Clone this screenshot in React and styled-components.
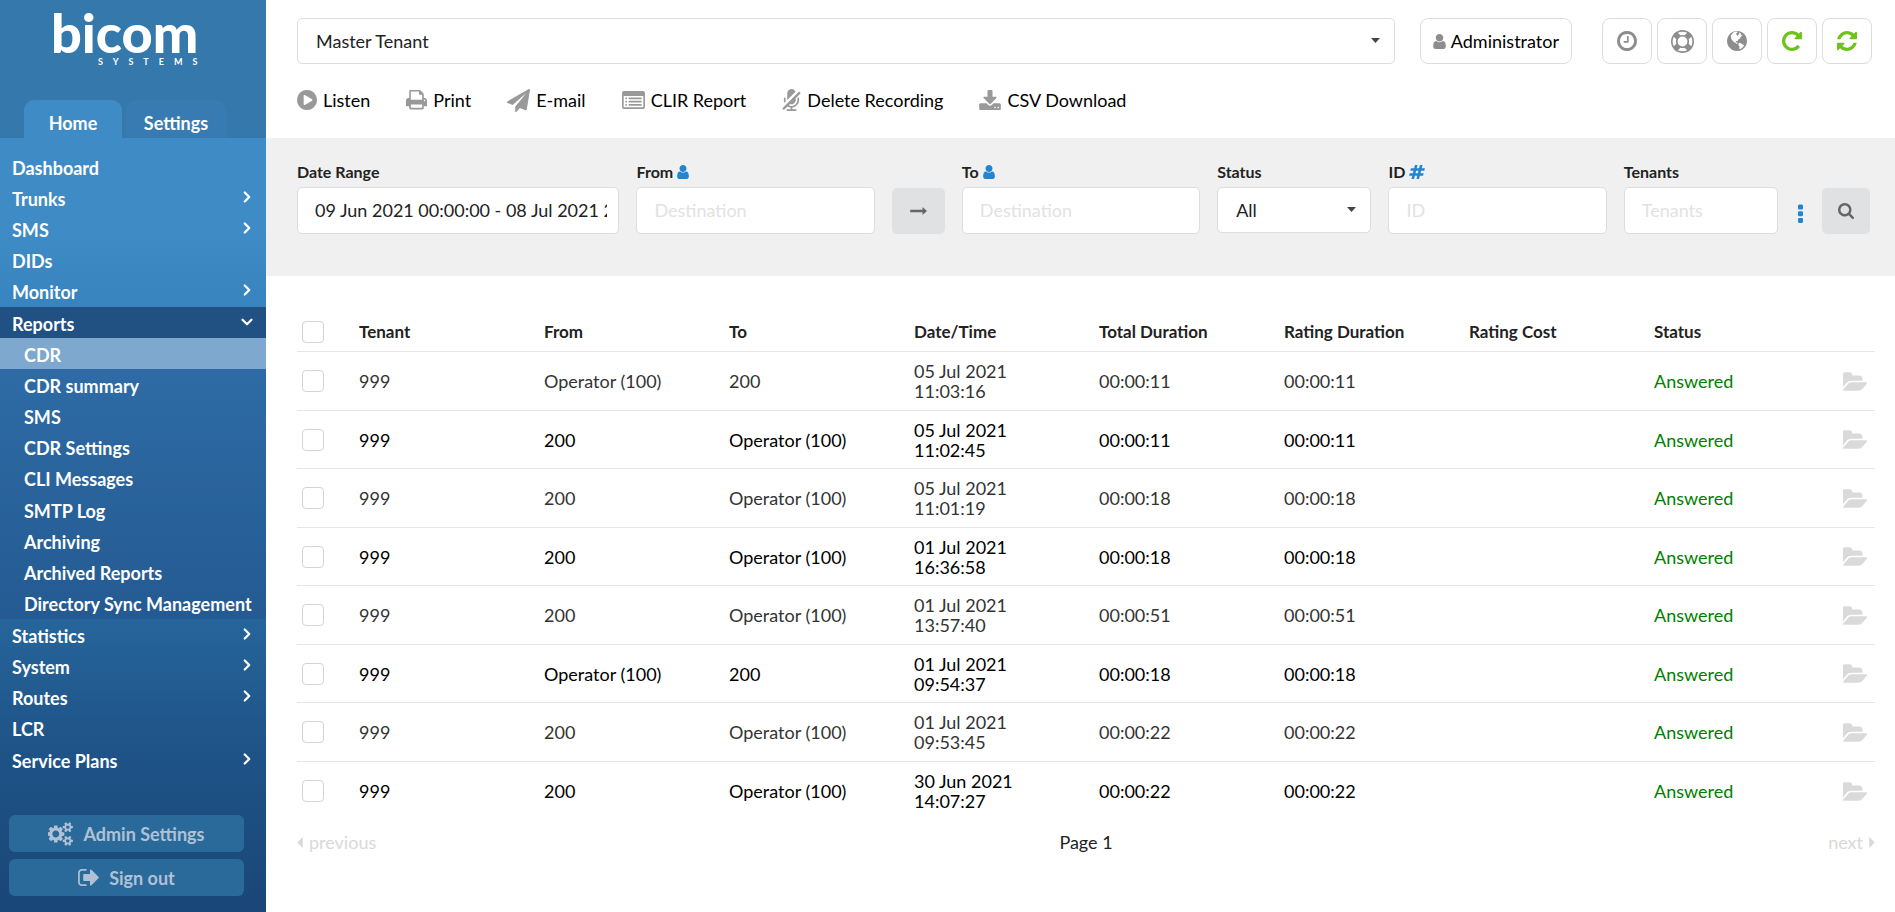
import React from "react";
import styled, { createGlobalStyle } from "styled-components";
import { ChevronDown, ChevronRight } from "lucide-react";

const GlobalStyle = createGlobalStyle`
    * {
        box-sizing: border-box;
    }
    body {
        margin: 0;
        background: #fff;
        color: #222;
        font-family: Lato, "Liberation Sans", sans-serif;
        font-size: 18px;
        line-height: 20px;
    }
    button, input, select {
        margin: 0;
        font-family: inherit;
        font-size: 18px;
    }
    button {
        cursor: pointer;
    }
`

/* Icons, all on the same 1792 grid */

const COG_SMALL = "v140q0 16-149 31-12 27-30 52 51 113 51 138 0 4-4 7-122 71-124 71-8 0-46-47t-52-68q-20 2-30 2t-30-2q-14 21-52 68t-46 47q-2 0-124-71-4-3-4-7 0-25 51-138-18-25-30-52-149-15-149-31v-140q0-16 149-31 13-29 30-52-51-113-51-138 0-4 4-7 4-2 35-20t59-34 30-16q8 0 46 46.5t52 67.5q20-2 30-2t30 2q51-71 92-112l6-2q4 0 124 70 4 3 4 7 0 25-51 138 17 23 30 52 149 15 149 31z"
const BULLET = "v64q0 13-9.5 22.5t-22.5 9.5h-64q-13 0-22.5-9.5t-9.5-22.5v-64q0-13 9.5-22.5t22.5-9.5h64q13 0 22.5 9.5t9.5 22.5z"
const LINE = "v64q0 13-9.5 22.5t-22.5 9.5h-960q-13 0-22.5-9.5t-9.5-22.5v-64q0-13 9.5-22.5t22.5-9.5h960q13 0 22.5 9.5t9.5 22.5z"
const DOT = "v192q0 40-28 68t-68 28h-192q-40 0-68-28t-28-68v-192q0-40 28-68t68-28h192q40 0 68 28t28 68z"

const icons = {
    play: "M896 128q209 0 385.5 103t279.5 279.5 103 385.5-103 385.5-279.5 279.5-385.5 103-385.5-103-279.5-279.5-103-385.5 103-385.5 279.5-279.5 385.5-103zm384 823q32-18 32-55t-32-55l-544-320q-31-19-64-1-32 19-32 56v640q0 37 32 56 16 8 32 8 17 0 32-9z",
    print: "M448 1536h896v-256h-896v256zm0-640h896v-384h-160q-40 0-68-28t-28-68v-160h-640v640zm1152 64q0-26-19-45t-45-19-45 19-19 45 19 45 45 19 45-19 19-45zm128 0v416q0 13-9.5 22.5t-22.5 9.5h-224v160q0 40-28 68t-68 28h-960q-40 0-68-28t-28-68v-160h-224q-13 0-22.5-9.5t-9.5-22.5v-416q0-79 56.5-135.5t135.5-56.5h64v-544q0-40 28-68t68-28h672q40 0 88 20t76 48l152 152q28 28 48 76t20 88v256h64q79 0 135.5 56.5t56.5 135.5z",
    plane: "M1764 11q33 24 27 64l-256 1536q-5 29-32 45-14 8-31 8-11 0-24-5l-453-185-242 295q-18 23-49 23-13 0-22-4-19-7-30.5-23.5t-11.5-36.5v-349l864-1059-1069 925-395-162q-37-14-40-55-2-40 32-59l1664-960q15-9 32-9 20 0 36 11z",
    list: `M384 1184${BULLET}M384 928${BULLET}M384 672${BULLET}M1536 1184${LINE}M1536 928${LINE}M1536 672${LINE}M1664 1376v-832q0-13-9.5-22.5t-22.5-9.5h-1472q-13 0-22.5 9.5t-9.5 22.5v832q0 13 9.5 22.5t22.5 9.5h1472q13 0 22.5-9.5t9.5-22.5zm128-1088v1088q0 66-47 113t-113 47h-1472q-66 0-113-47t-47-113v-1088q0-66 47-113t113-47h1472q66 0 113 47t47 113z`,
    micOff: "M271 943l-101 101q-42-103-42-211v-128q0-26 19-45t45-19 45 19 19 45v128q0 53 15 110zm1114-602l-361 361v128q0 132-94 226t-226 94q-55 0-109-19l-96 96q97 51 205 51 185 0 316.5-131.5t131.5-316.5v-128q0-26 19-45t45-19 45 19 19 45v128q0 221-147.5 384.5t-364.5 187.5v132h256q26 0 45 19t19 45-19 45-45 19h-640q-26 0-45-19t-19-45 19-45 45-19h256v-132q-125-13-235-81l-254 254q-10 10-23 10t-23-10l-82-82q-10-10-10-23t10-23l1234-1234q10-10 23-10t23 10l82 82q10 10 10 23t-10 23zm-380-132l-621 621v-512q0-132 94-226t226-94q102 0 184.5 59t116.5 152z",
    download: "M1344 1344q0-26-19-45t-45-19-45 19-19 45 19 45 45 19 45-19 19-45zm256 0q0-26-19-45t-45-19-45 19-19 45 19 45 45 19 45-19 19-45zm128-224v320q0 40-28 68t-68 28h-1472q-40 0-68-28t-28-68v-320q0-40 28-68t68-28h465l135 136q58 56 136 56t136-56l136-136h464q40 0 68 28t28 68zm-325-569q17 41-14 70l-448 448q-18 19-45 19t-45-19l-448-448q-31-29-14-70 17-39 59-39h256v-448q0-26 19-45t45-19h256q26 0 45 19t19 45v448h256q42 0 59 39z",
    user: "M1536 1399q0 109-62.5 187t-150.5 78h-854q-88 0-150.5-78t-62.5-187q0-85 8.5-160.5t31.5-152 58.5-131 94-89 134.5-34.5q131 128 313 128t313-128q76 0 134.5 34.5t94 89 58.5 131 31.5 152 8.5 160.5zm-256-887q0 159-112.5 271.5t-271.5 112.5-271.5-112.5-112.5-271.5 112.5-271.5 271.5-112.5 271.5 112.5 112.5 271.5z",
    arrow: "M1728 893q0 14-10 24l-384 354q-16 14-35 6-19-9-19-29v-224h-1248q-14 0-23-9t-9-23v-192q0-14 9-23t23-9h1248v-224q0-21 19-29t35 5l384 350q10 10 10 23z",
    dots: `M1088 1248${DOT}M1088 736${DOT}M1088 224${DOT}`,
    search: "M1216 832q0-185-131.5-316.5t-316.5-131.5-316.5 131.5-131.5 316.5 131.5 316.5 316.5 131.5 316.5-131.5 131.5-316.5zm512 832q0 52-38 90t-90 38q-54 0-90-38l-343-342q-179 124-399 124-143 0-273.5-55.5t-225-150-150-225-55.5-273.5 55.5-273.5 150-225 225-150 273.5-55.5 273.5 55.5 225 150 150 225 55.5 273.5q0 220-124 399l343 343q37 37 37 90z",
    clock: "M1024 544v448q0 14-9 23t-23 9h-320q-14 0-23-9t-9-23v-64q0-14 9-23t23-9h224v-352q0-14 9-23t23-9h64q14 0 23 9t9 23zm416 352q0-148-73-273t-198-198-273-73-273 73-198 198-73 273 73 273 198 198 273 73 273-73 198-198 73-273zm224 0q0 209-103 385.5t-279.5 279.5-385.5 103-385.5-103-279.5-279.5-103-385.5 103-385.5 279.5-279.5 385.5-103 385.5 103 279.5 279.5 103 385.5z",
    ring: "M896 0q182 0 348 71t286 191 191 286 71 348-71 348-191 286-286 191-348 71-348-71-286-191-191-286-71-348 71-348 191-286 286-191 348-71zm0 128q-190 0-361 90l194 194q82-28 167-28t167 28l194-194q-171-90-361-90zm-678 1129l194-194q-28-82-28-167t28-167l-194-194q-90 171-90 361t90 361zm678 407q190 0 361-90l-194-194q-82 28-167 28t-167-28l-194 194q171 90 361 90zm0-384q159 0 271.5-112.5t112.5-271.5-112.5-271.5-271.5-112.5-271.5 112.5-112.5 271.5 112.5 271.5 271.5 112.5zm484-217l194 194q90-171 90-361t-90-361l-194 194q28 82 28 167t-28 167z",
    globe: "M896 128q209 0 385.5 103t279.5 279.5 103 385.5-103 385.5-279.5 279.5-385.5 103-385.5-103-279.5-279.5-103-385.5 103-385.5 279.5-279.5 385.5-103zM480 400l-70 110 40 100 10 130 90 110 120 140 130 50 90 80 50-30-60-90-80-10 10-90 90-10 50 50 10-110 90-90 110-60-60-50 120-20-20-90 50 20 70-60-110-50-40-130-120-70 20 110-60 80-80 70-50-80-80-50 100-80 40-90-130-20-180 50zM1060 1030l-60 100 30 130 60 60-10 190 50 20 170-110 130-160-30-70-130-60-60-70z",
    repeat: "M1664 256v448q0 26-19 45t-45 19h-448q-42 0-59-40-17-39 14-69l138-138q-148-137-349-137-104 0-198.5 40.5t-163.5 109.5-109.5 163.5-40.5 198.5 40.5 198.5 109.5 163.5 163.5 109.5 198.5 40.5q119 0 225-52t179-147q7-10 23-12 15 0 25 9l137 138q9 8 9.5 20.5t-7.5 22.5q-109 132-264 204.5t-327 72.5q-156 0-298-61t-245-164-164-245-61-298 61-298 164-245 245-164 298-61q147 0 284.5 55.5t244.5 156.5l130-129q29-31 70-14 39 17 39 59z",
    refresh: "M1639 1056q0 5-1 7-64 268-268 434.5t-478 166.5q-146 0-282.5-55t-243.5-157l-129 129q-19 19-45 19t-45-19-19-45v-448q0-26 19-45t45-19h448q26 0 45 19t19 45-19 45l-137 137q71 66 161 102t187 36q134 0 250-65t186-179q11-17 53-117 8-23 30-23h192q13 0 22.5 9.5t9.5 22.5zm25-800v448q0 26-19 45t-45 19h-448q-26 0-45-19t-19-45 19-45l138-138q-148-137-349-137-134 0-250 65t-186 179q-11 17-53 117-8 23-30 23h-199q-13 0-22.5-9.5t-9.5-22.5v-7q65-268 270-434.5t480-166.5q146 0 284 55.5t245 156.5l130-129q19-19 45-19t45 19 19 45z",
    folder: "M1815 952q0 31-31 66l-336 396q-43 51-120.5 86.5t-143.5 35.5h-1088q-34 0-60.5-13t-26.5-43q0-31 31-66l336-396q43-51 120.5-86.5t143.5-35.5h1088q34 0 60.5 13t26.5 43zm-343-344v160h-832q-94 0-197 47.5t-164 119.5l-337 396-5 6q0-4-.5-12.5t-.5-12.5v-960q0-92 66-158t158-66h320q92 0 158 66t66 158v32h544q92 0 158 66t66 158z",
    cogs: `M832 896q0-106-75-181t-181-75-181 75-75 181 75 181 181 75 181-75 75-181zm768 512q0-52-38-90t-90-38-90 38-38 90q0 53 37.5 90.5t90.5 37.5 90.5-37.5 37.5-90.5zm0-1024q0-52-38-90t-90-38-90 38-38 90q0 53 37.5 90.5t90.5 37.5 90.5-37.5 37.5-90.5zm-384 421v185q0 10-7 19.5t-16 10.5l-155 24q-11 35-32 76 34 48 90 115 7 11 7 20 0 12-7 19-23 30-82.5 89.5t-78.5 59.5q-11 0-21-7l-115-90q-37 19-77 31-11 108-23 155-7 24-30 24h-186q-11 0-20-7.5t-10-17.5l-23-153q-34-10-75-31l-118 89q-7 7-20 7-11 0-21-8-144-133-144-160 0-9 7-19 10-14 41-53t47-61q-23-44-35-82l-152-24q-10-1-17-9.5t-7-19.5v-185q0-10 7-19.5t16-10.5l155-24q11-35 32-76-34-48-90-115-7-11-7-20 0-12 7-20 22-30 82-89t79-59q11 0 21 7l115 90q34-18 77-32 11-108 23-154 7-24 30-24h186q11 0 20 7.5t10 17.5l23 153q34 10 75 31l118-89q8-7 20-7 11 0 21 8 144 133 144 160 0 8-7 19-12 16-42 54t-45 60q23 48 34 82l152 23q10 2 17 10.5t7 19.5zM1856 1338${COG_SMALL}M1856 314${COG_SMALL}`,
    signOut: "M704 1440q0 4 1 20t.5 26.5-3 23.5-10 19.5-20.5 6.5h-320q-119 0-203.5-84.5t-84.5-203.5v-704q0-119 84.5-203.5t203.5-84.5h320q13 0 22.5 9.5t9.5 22.5q0 4 1 20t.5 26.5-3 23.5-10 19.5-20.5 6.5h-320q-66 0-113 47t-47 113v704q0 66 47 113t113 47h312l11.5 1 11.5 3 8 5.5 7 9 2 13.5zm928-544q0 26-19 45l-544 544q-19 19-45 19t-45-19-19-45v-288h-448q-26 0-45-19t-19-45v-384q0-26 19-45t45-19h448v-288q0-26 19-45t45-19 45 19l544 544q19 19 19 45z",
    hash: "M991 1024l64-256h-254l-64 256h254zm768-504l-56 224q-7 24-31 24h-327l-64 256h311q15 0 25 12 10 14 6 28l-56 224q-5 24-31 24h-327l-81 328q-7 24-31 24h-224q-16 0-26-12-9-12-6-28l78-312h-254l-81 328q-7 24-31 24h-225q-15 0-25-12-9-12-6-28l78-312h-311q-15 0-25-12-9-12-6-28l56-224q7-24 31-24h327l64-256h-311q-15 0-25-12-10-14-6-28l56-224q5-24 31-24h327l81-328q7-24 32-24h224q15 0 25 12 9 12 6 28l-78 312h254l81-328q7-24 32-24h224q15 0 25 12 9 12 6 28l-78 312h311q15 0 25 12 9 12 6 28z",
    caretDown: "M384 640h1024l-512 576z",
    caretLeft: "M1152 320v1152l-576-576z",
    caretRight: "M640 320v1152l576-576z",
}

// [min x, min y, width, height]; the drawing is scaled to the given height
const boxes = {
    play: [128, 128, 1536, 1536],
    print: [64, 128, 1664, 1664],
    plane: [0, 0, 1792, 1792],
    list: [0, 128, 1792, 1408],
    micOff: [0, 0, 1408, 1664],
    download: [64, 0, 1664, 1536],
    user: [256, 128, 1280, 1536],
    arrow: [0, 480, 1728, 832],
    dots: [704, 96, 384, 1440],
    search: [64, 128, 1664, 1664],
    clock: [128, 128, 1536, 1536],
    globe: [128, 128, 1536, 1536],
    repeat: [128, 128, 1536, 1536],
    refresh: [128, 128, 1536, 1536],
    folder: [0, 128, 1815, 1408],
    cogs: [0, 0, 1856, 1792],
    signOut: [64, 256, 1568, 1280],
    hash: [33, 128, 1728, 1536],
    caretDown: [384, 640, 1024, 576],
    caretLeft: [576, 320, 576, 1152],
    caretRight: [640, 320, 576, 1152],
}

const Icon = ({ name, size }) => {
    const box = boxes[name] || [0, 0, 1792, 1792]
    return (
        <svg
            viewBox={box.join(" ")}
            height={size}
            width={Math.round((size * box[2]) / box[3])}
            fill="currentColor"
            fillRule={name === "globe" ? "evenodd" : "nonzero"}
            aria-hidden="true"
        >
            <path d={icons[name]} />
        </svg>
    )
}

const Page = styled.div`
    display: grid;
    grid-template-columns: 266px minmax(0, 1fr);
    min-height: 100vh;
    svg {
        display: block;
        flex: none;
    }
`

/* Sidebar */

const Sidebar = styled.aside`
    display: flex;
    flex-direction: column;
    background: #3578ab;
    color: #fff;
    font-weight: 700;
`
const Brand = styled.header`
    height: 100px;
    padding: 6px 0 0 52px;
`
const Tabs = styled.nav`
    display: flex;
    gap: 4px;
    padding-left: 24px;
`
const Tab = styled.a`
    width: ${({ $active }) => ($active ? 98 : 100)}px;
    height: 38px;
    padding-top: 13px;
    border-radius: 10px 10px 0 0;
    background: ${({ $active }) => ($active ? "#3f8bc5" : "#377bb2")};
    color: #fff;
    text-align: center;
    text-decoration: none;
`
const SidebarBody = styled.div`
    display: flex;
    flex: 1;
    flex-direction: column;
    padding: 13px 0 16px;
    background: linear-gradient(#3f8bc5 0%, #3e8bc5 12%, #3782bc 24%, #26659b 62%, #1f5488 78%, #1a4678 100%);
`
const Menu = styled.ul`
    margin: 0;
    padding: 0;
    list-style: none;
    > li:nth-child(5n) {
        padding-bottom: 1px;
    }
`
const SubMenu = styled(Menu)`
    padding-bottom: 1px;
    background: rgba(32, 66, 125, 0.3);
`
const MenuLink = styled.a`
    display: flex;
    align-items: center;
    justify-content: space-between;
    height: 31px;
    padding: 2px 10px 0 ${({ $sub }) => ($sub ? 24 : 12)}px;
    background: ${({ $open, $current }) => ($open ? "#215083" : $current ? "#7ea8ce" : "none")};
    color: #fff;
    text-decoration: none;
    white-space: nowrap;
    svg {
        margin-bottom: 4px;
    }
`
const SidebarButtons = styled.div`
    display: flex;
    flex-direction: column;
    gap: 7px;
    margin-top: auto;
    padding: 0 22px 0 9px;
`
const SidebarButton = styled.button`
    display: flex;
    align-items: center;
    justify-content: center;
    gap: 10px;
    height: 37px;
    border: 0;
    border-radius: 6px;
    background: #2a6a9b;
    color: #b0c1d5;
    font-weight: 700;
`

/* Top part */

const Main = styled.main`
    display: flex;
    flex-direction: column;
`
const TopBar = styled.div`
    display: flex;
    padding: 18px 23px 0 31px;
`
const SelectBox = styled.div`
    position: relative;
    flex: 1;
    color: #444;
    svg {
        position: absolute;
        top: 20px;
        right: 15px;
        pointer-events: none;
    }
`
const Select = styled.select`
    appearance: none;
    display: block;
    width: 100%;
    height: 46px;
    padding: 0 18px;
    border: 1px solid #dcdddd;
    border-radius: 5px;
    background: #fff;
    color: #222;
`
const OutlineButton = styled.button`
    display: flex;
    align-items: center;
    justify-content: center;
    gap: 5px;
    min-width: 50px;
    height: 46px;
    padding: 0 12px;
    border: 1px solid #dcdcdc;
    border-radius: 8px;
    background: #fff;
    color: #000;
    svg {
        color: ${({ $green }) => ($green ? "#6ec21c" : "#8d8d8d")};
    }
`
const UserArea = styled.div`
    margin: 0 30px 0 25px;
`
const IconButtons = styled.div`
    display: flex;
    gap: 5px;
`
const Toolbar = styled.div`
    display: flex;
    align-items: center;
    gap: 36px;
    height: 74px;
    padding: 0 31px 2px;
`
const ToolButton = styled.button`
    display: flex;
    align-items: center;
    gap: 6px;
    padding: 0;
    border: 0;
    background: none;
    color: #000;
    white-space: nowrap;
    svg {
        color: #999;
    }
`

/* Filters */

const Filters = styled.form`
    display: grid;
    grid-template-columns:
        minmax(0, 322fr) minmax(0, 238fr) 53px minmax(0, 238fr) minmax(0, 154fr)
        minmax(0, 218fr) minmax(0, 154fr) 10px 48px;
    align-items: end;
    gap: 17px;
    height: 138px;
    padding: 0 25px 42px 31px;
    background: #f0f0f0;
`
const Field = styled.div`
    display: flex;
    flex-direction: column;
    gap: 5px;
    height: 72px;
`
const Label = styled.label`
    display: flex;
    align-items: center;
    gap: 4px;
    font-size: 16px;
    font-weight: 700;
    svg {
        color: #2185d0;
    }
`
const Input = styled.input`
    width: 100%;
    height: 47px;
    padding: 0 11px 1px 17px;
    border: 1px solid #dcdddd;
    border-radius: 5px;
    background: #fff;
    color: #222;
    &::placeholder {
        color: #e2e2e2;
        opacity: 1;
    }
`
const GreyButton = styled.button`
    display: flex;
    align-items: center;
    justify-content: center;
    height: 46px;
    padding: 0;
    border: 0;
    border-radius: 5px;
    background: #e0e1e2;
    color: #666;
`
const MoreButton = styled.button`
    display: flex;
    align-items: center;
    justify-content: center;
    height: 46px;
    padding: 4px 0 0;
    border: 0;
    background: none;
    color: #2185d0;
`

/* Records */

const Records = styled.section`
    padding: 36px 20px 24px 31px;
`
const Table = styled.table`
    width: 100%;
    table-layout: fixed;
    border-collapse: separate;
    border-spacing: 0;
`
const HeadCell = styled.th`
    width: ${({ $width }) => $width || "auto"};
    height: 40px;
    padding: 1px 0 0;
    border-bottom: 1px solid #e6e6e6;
    font-weight: 700;
    font-size: 17px;
    text-align: left;
`
const Row = styled.tr`
    color: #333;
    &:nth-child(even) {
        color: #000;
    }
    td {
        height: 59px;
    }
    &:nth-child(even) td {
        height: 58px;
    }
    &:last-child td {
        border-bottom: 0;
    }
`
const Cell = styled.td`
    padding: 0;
    border-bottom: 1px solid #e6e6e6;
    color: ${({ $answered }) => ($answered ? "#008000" : "inherit")};
`
const Stamp = styled.div`
    width: 110px;
`
const Checkbox = styled.input`
    appearance: none;
    display: block;
    width: 22px;
    height: 22px;
    margin: 0 0 0 5px;
    border: 1px solid #d4d4d5;
    border-radius: 4px;
    background: #fff;
    &:checked {
        background: #2185d0;
    }
`
const FolderButton = styled.button`
    display: block;
    margin-left: 4px;
    padding: 0;
    border: 0;
    background: none;
    color: #dadada;
`
const Pager = styled.nav`
    display: grid;
    grid-template-columns: 1fr auto 1fr;
    padding-top: 12px;
    color: #222;
`
const PagerLink = styled.a`
    display: flex;
    align-items: center;
    justify-self: ${({ $end }) => ($end ? "end" : "start")};
    gap: 6px;
    color: #d9d9d9;
    text-decoration: none;
`

const menu = [
    { name: "Dashboard" },
    { name: "Trunks", more: true },
    { name: "SMS", more: true },
    { name: "DIDs" },
    { name: "Monitor", more: true },
    {
        name: "Reports",
        items: [
            "CDR",
            "CDR summary",
            "SMS",
            "CDR Settings",
            "CLI Messages",
            "SMTP Log",
            "Archiving",
            "Archived Reports",
            "Directory Sync Management",
        ],
    },
    { name: "Statistics", more: true },
    { name: "System", more: true },
    { name: "Routes", more: true },
    { name: "LCR" },
    { name: "Service Plans", more: true },
]

const tools = [
    { name: "Listen", icon: "play", size: 20 },
    { name: "Print", icon: "print", size: 21 },
    { name: "E-mail", icon: "plane", size: 23 },
    { name: "CLIR Report", icon: "list", size: 18 },
    { name: "Delete Recording", icon: "micOff", size: 22 },
    { name: "CSV Download", icon: "download", size: 20 },
]

const quickActions = [
    { name: "History", icon: "clock", size: 20 },
    { name: "Help", icon: "ring", size: 23 },
    { name: "Language", icon: "globe", size: 20 },
    { name: "Reload", icon: "repeat", size: 20, green: true },
    { name: "Refresh", icon: "refresh", size: 20, green: true },
]

const columns = ["Tenant", "From", "To", "Date/Time", "Total Duration", "Rating Duration", "Rating Cost", "Status"]

const calls = [
    { from: "Operator (100)", to: "200", date: "05 Jul 2021", time: "11:03:16", duration: "00:00:11" },
    { from: "200", to: "Operator (100)", date: "05 Jul 2021", time: "11:02:45", duration: "00:00:11" },
    { from: "200", to: "Operator (100)", date: "05 Jul 2021", time: "11:01:19", duration: "00:00:18" },
    { from: "200", to: "Operator (100)", date: "01 Jul 2021", time: "16:36:58", duration: "00:00:18" },
    { from: "200", to: "Operator (100)", date: "01 Jul 2021", time: "13:57:40", duration: "00:00:51" },
    { from: "Operator (100)", to: "200", date: "01 Jul 2021", time: "09:54:37", duration: "00:00:18" },
    { from: "200", to: "Operator (100)", date: "01 Jul 2021", time: "09:53:45", duration: "00:00:22" },
    { from: "200", to: "Operator (100)", date: "30 Jun 2021", time: "14:07:27", duration: "00:00:22" },
]

const Logo = () => (
    <svg width="170" height="76" viewBox="0 0 170 76" fill="#fff" fontFamily="Lato, sans-serif">
        <text x="-1" y="47" fontSize="54" fontWeight="900">bicom</text>
        <text x="46" y="59" fontSize="9" fontWeight="700" letterSpacing="10">SYSTEMS</text>
    </svg>
)

const SideNav = () => (
    <Sidebar>
        <Brand>
            <Logo />
        </Brand>
        <Tabs>
            <Tab href="#home" $active>Home</Tab>
            <Tab href="#settings">Settings</Tab>
        </Tabs>
        <SidebarBody>
            <Menu>
                {menu.map(({ name, more, items }) => (
                    <li key={name}>
                        <MenuLink href="#" $open={!!items}>
                            {name}
                            {more && <ChevronRight size={18} strokeWidth={3} />}
                            {items && <ChevronDown size={18} strokeWidth={3} />}
                        </MenuLink>
                        {items && (
                            <SubMenu>
                                {items.map((item) => (
                                    <li key={item}>
                                        <MenuLink href="#" $sub $current={item === "CDR"}>{item}</MenuLink>
                                    </li>
                                ))}
                            </SubMenu>
                        )}
                    </li>
                ))}
            </Menu>
            <SidebarButtons>
                <SidebarButton type="button">
                    <Icon name="cogs" size={24} />
                    Admin Settings
                </SidebarButton>
                <SidebarButton type="button">
                    <Icon name="signOut" size={17} />
                    Sign out
                </SidebarButton>
            </SidebarButtons>
        </SidebarBody>
    </Sidebar>
)

const FilterForm = () => (
    <Filters onSubmit={(e) => e.preventDefault()}>
        <Field>
            <Label htmlFor="range">Date Range</Label>
            <Input id="range" defaultValue="09 Jun 2021 00:00:00 - 08 Jul 2021 23:59:59" />
        </Field>
        <Field>
            <Label htmlFor="from">From <Icon name="user" size={14} /></Label>
            <Input id="from" placeholder="Destination" />
        </Field>
        <GreyButton type="button" aria-label="Direction">
            <Icon name="arrow" size={8} />
        </GreyButton>
        <Field>
            <Label htmlFor="to">To <Icon name="user" size={14} /></Label>
            <Input id="to" placeholder="Destination" />
        </Field>
        <Field>
            <Label htmlFor="status">Status</Label>
            <SelectBox>
                <Select id="status">
                    <option>All</option>
                </Select>
                <Icon name="caretDown" size={5} />
            </SelectBox>
        </Field>
        <Field>
            <Label htmlFor="id">ID <Icon name="hash" size={14} /></Label>
            <Input id="id" placeholder="ID" />
        </Field>
        <Field>
            <Label htmlFor="tenants">Tenants</Label>
            <Input id="tenants" placeholder="Tenants" />
        </Field>
        <MoreButton type="button" aria-label="More filters">
            <Icon name="dots" size={19} />
        </MoreButton>
        <GreyButton type="submit" aria-label="Search">
            <Icon name="search" size={16} />
        </GreyButton>
    </Filters>
)

const CallTable = () => (
    <Table>
        <thead>
            <tr>
                <HeadCell $width="62px">
                    <Checkbox type="checkbox" aria-label="Select all" />
                </HeadCell>
                {columns.map((column) => (
                    <HeadCell key={column}>{column}</HeadCell>
                ))}
                <HeadCell $width="36px" />
            </tr>
        </thead>
        <tbody>
            {calls.map((call) => (
                <Row key={call.time}>
                    <Cell><Checkbox type="checkbox" aria-label={`Select call ${call.time}`} /></Cell>
                    <Cell>999</Cell>
                    <Cell>{call.from}</Cell>
                    <Cell>{call.to}</Cell>
                    <Cell><Stamp>{call.date} {call.time}</Stamp></Cell>
                    <Cell>{call.duration}</Cell>
                    <Cell>{call.duration}</Cell>
                    <Cell />
                    <Cell $answered>Answered</Cell>
                    <Cell>
                        <FolderButton type="button" aria-label="Open">
                            <Icon name="folder" size={19} />
                        </FolderButton>
                    </Cell>
                </Row>
            ))}
        </tbody>
    </Table>
)

const App = () => (
    <>
        <GlobalStyle />
        <Page>
            <SideNav />
            <Main>
                <TopBar>
                    <SelectBox>
                        <Select aria-label="Tenant">
                            <option>Master Tenant</option>
                        </Select>
                        <Icon name="caretDown" size={5} />
                    </SelectBox>
                    <UserArea>
                        <OutlineButton type="button">
                            <Icon name="user" size={15} />
                            Administrator
                        </OutlineButton>
                    </UserArea>
                    <IconButtons>
                        {quickActions.map(({ name, icon, size, green }) => (
                            <OutlineButton key={name} type="button" aria-label={name} $green={green}>
                                <Icon name={icon} size={size} />
                            </OutlineButton>
                        ))}
                    </IconButtons>
                </TopBar>
                <Toolbar>
                    {tools.map(({ name, icon, size }) => (
                        <ToolButton key={name} type="button">
                            <Icon name={icon} size={size} />
                            {name}
                        </ToolButton>
                    ))}
                </Toolbar>
                <FilterForm />
                <Records>
                    <CallTable />
                    <Pager>
                        <PagerLink href="#previous"><Icon name="caretLeft" size={11} />previous</PagerLink>
                        <span>Page 1</span>
                        <PagerLink href="#next" $end>next<Icon name="caretRight" size={11} /></PagerLink>
                    </Pager>
                </Records>
            </Main>
        </Page>
    </>
)

export default App
